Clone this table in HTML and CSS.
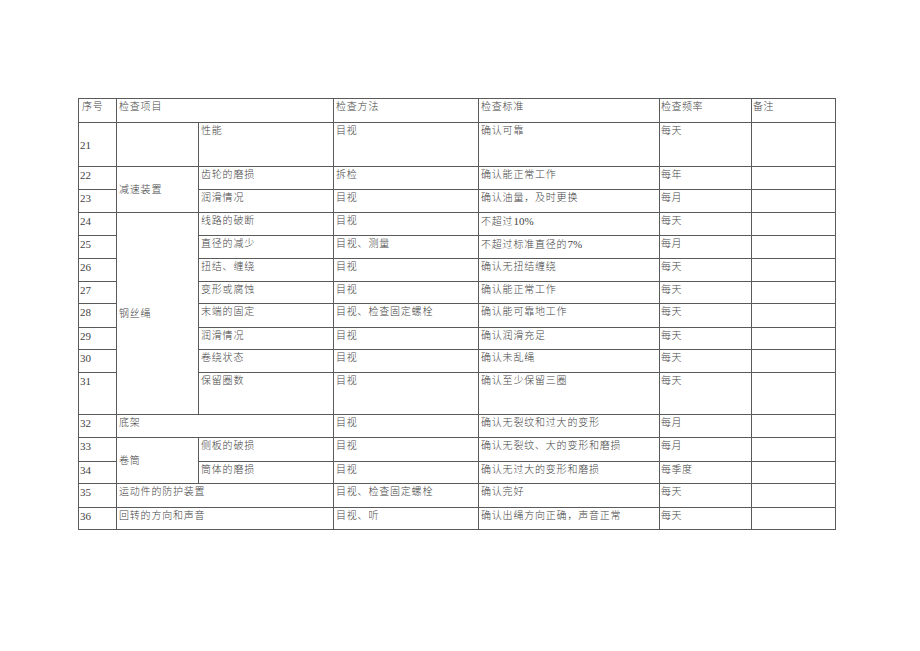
FILE: index.html
```html
<!DOCTYPE html>
<html lang="zh">
<head>
<meta charset="utf-8">
<link rel="stylesheet" href="styles.css">
</head>
<body>
<div class="page">
<table class="sheet">
<colgroup>
<col class="c1"><col class="c2"><col class="c3"><col class="c4"><col class="c5"><col class="c6"><col class="c7">
</colgroup>
<tr class="h24"><td class="no hd">序号</td><td colspan="2">检查项目</td><td>检查方法</td><td>检查标准</td><td class="fq">检查频率</td><td class="fq">备注</td></tr>
<tr class="h44"><td class="no mid">21</td><td></td><td>性能</td><td>目视</td><td>确认可靠</td><td class="fq">每天</td><td></td></tr>
<tr class="h23"><td class="no">22</td><td rowspan="2" class="mid">减速装置</td><td>齿轮的磨损</td><td>拆检</td><td>确认能正常工作</td><td class="fq">每年</td><td></td></tr>
<tr class="h23"><td class="no">23</td><td>润滑情况</td><td>目视</td><td>确认油量，及时更换</td><td class="fq">每月</td><td></td></tr>
<tr class="h23"><td class="no">24</td><td rowspan="8" class="mid">钢丝绳</td><td>线路的破断</td><td>目视</td><td>不超过<span class="num">10%</span></td><td class="fq">每天</td><td></td></tr>
<tr class="h23"><td class="no">25</td><td>直径的减少</td><td>目视、测量</td><td>不超过标准直径的<span class="num">7%</span></td><td class="fq">每月</td><td></td></tr>
<tr class="h23"><td class="no">26</td><td>扭结、缠绕</td><td>目视</td><td>确认无扭结缠绕</td><td class="fq">每天</td><td></td></tr>
<tr class="h22"><td class="no">27</td><td>变形或腐蚀</td><td>目视</td><td>确认能正常工作</td><td class="fq">每天</td><td></td></tr>
<tr class="h24"><td class="no">28</td><td>末端的固定</td><td>目视、检查固定螺栓</td><td>确认能可靠地工作</td><td class="fq">每天</td><td></td></tr>
<tr class="h22"><td class="no">29</td><td>润滑情况</td><td>目视</td><td>确认润滑充足</td><td class="fq">每天</td><td></td></tr>
<tr class="h23"><td class="no">30</td><td>卷绕状态</td><td>目视</td><td>确认未乱绳</td><td class="fq">每天</td><td></td></tr>
<tr class="h42"><td class="no">31</td><td>保留圈数</td><td>目视</td><td>确认至少保留三圈</td><td class="fq">每天</td><td></td></tr>
<tr class="h23"><td class="no">32</td><td colspan="2">底架</td><td>目视</td><td>确认无裂纹和过大的变形</td><td class="fq">每月</td><td></td></tr>
<tr class="h24"><td class="no">33</td><td rowspan="2" class="mid">卷筒</td><td>侧板的破损</td><td>目视</td><td>确认无裂纹、大的变形和磨损</td><td class="fq">每月</td><td></td></tr>
<tr class="h22"><td class="no">34</td><td>筒体的磨损</td><td>目视</td><td>确认无过大的变形和磨损</td><td class="fq">每季度</td><td></td></tr>
<tr class="h24"><td class="no">35</td><td colspan="2">运动件的防护装置</td><td>目视、检查固定螺栓</td><td>确认完好</td><td class="fq">每天</td><td></td></tr>
<tr class="h22"><td class="no">36</td><td colspan="2">回转的方向和声音</td><td>目视、听</td><td>确认出绳方向正确，声音正常</td><td class="fq">每天</td><td></td></tr>
</table>
</div>
</body>
</html>
```
FILE: styles.css
```css
html, body {
  margin: 0;
  padding: 0;
  background: #ffffff;
}
.page {
  padding: 98px 0 0 78px;
}
.sheet {
  border-collapse: collapse;
  table-layout: fixed;
  width: 757px;
  font-family: "Liberation Serif", "Noto Sans CJK SC", serif;
  font-size: 10px;
  font-weight: 300;
  color: #444444;
}
.c1 { width: 38px; }
.c2 { width: 82px; }
.c3 { width: 135px; }
.c4 { width: 145px; }
.c5 { width: 181px; }
.c6 { width: 92px; }
.c7 { width: 84px; }
.sheet td {
  border: 1px solid #5a5a5a;
  padding: 1px 0 0 2px;
  vertical-align: top;
  line-height: 14px;
  letter-spacing: 0.8px;
  white-space: nowrap;
  overflow: hidden;
}
.sheet td.no {
  padding-left: 1px;
  font-size: 11px;
  letter-spacing: 0;
}
.sheet td.no.hd {
  font-size: 10px;
  padding-left: 3px;
  letter-spacing: 0.8px;
}
.sheet td.fq {
  padding-left: 1px;
  letter-spacing: 0.5px;
}
.sheet td.mid {
  vertical-align: middle;
  padding-top: 0;
}
.num {
  font-size: 11px;
  letter-spacing: 0;
}
.h22 { height: 22px; }
.h23 { height: 23px; }
.h24 { height: 24px; }
.h42 { height: 42px; }
.h44 { height: 44px; }
```
